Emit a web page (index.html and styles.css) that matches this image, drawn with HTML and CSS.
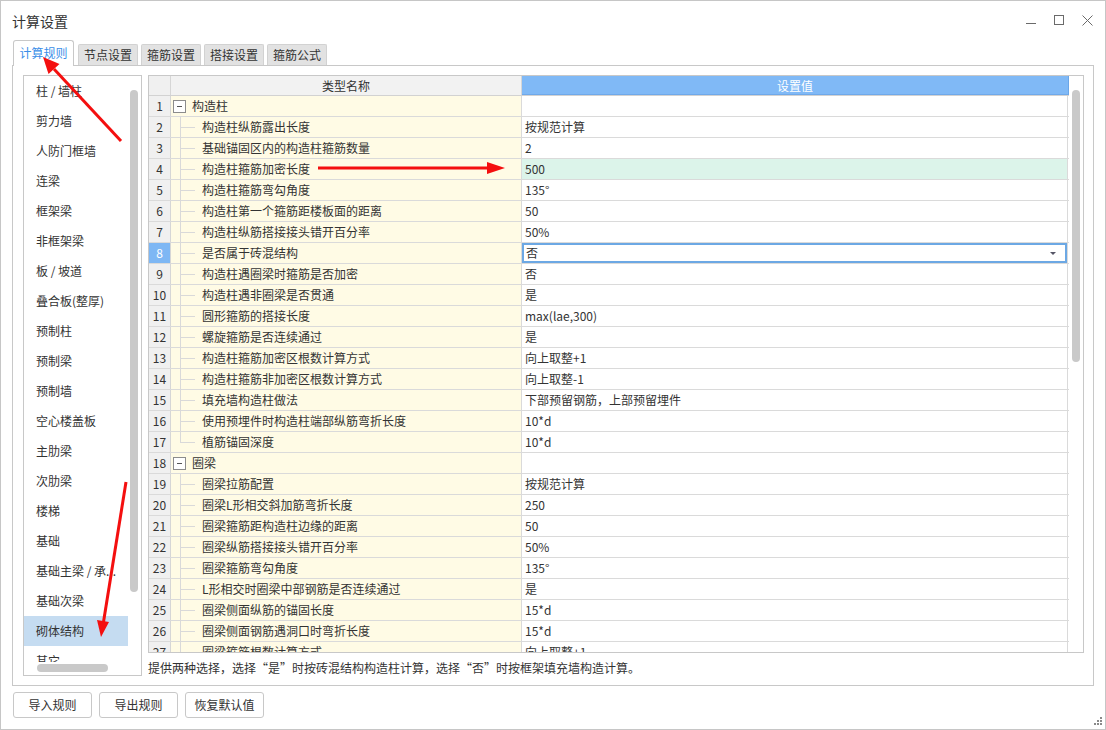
FILE: index.html
```html
<!DOCTYPE html>
<html lang="zh">
<head>
<meta charset="utf-8">
<title>计算设置</title>
<link rel="stylesheet" href="styles.css">
</head>
<body>
<div class="window">
  <div class="titlebar">
    <span class="title">计算设置</span>
    <div class="controls">
      <svg class="ctl" width="10" height="11" viewBox="0 0 10 11"><line x1="0" y1="8.5" x2="10" y2="8.5" stroke="#6a6a6a" stroke-width="1"/></svg>
      <svg class="ctl" width="10" height="11" viewBox="0 0 10 11"><rect x="0.5" y="0.5" width="9" height="9" fill="none" stroke="#6a6a6a" stroke-width="1"/></svg>
      <svg class="ctl" width="11" height="11" viewBox="0 0 11 11"><path d="M0.5 0.5 L10.5 10.5 M10.5 0.5 L0.5 10.5" stroke="#6a6a6a" stroke-width="1"/></svg>
    </div>
  </div>

  <div class="tabs">
    <div class="tab active">计算规则</div>
    <div class="tab">节点设置</div>
    <div class="tab">箍筋设置</div>
    <div class="tab">搭接设置</div>
    <div class="tab">箍筋公式</div>
  </div>

  <div class="panel">
    <div class="list">
      <div class="list-main">
        <div class="list-items">
          <div class="item">柱 / 墙柱</div>
          <div class="item">剪力墙</div>
          <div class="item">人防门框墙</div>
          <div class="item">连梁</div>
          <div class="item">框架梁</div>
          <div class="item">非框架梁</div>
          <div class="item">板 / 坡道</div>
          <div class="item">叠合板(整厚)</div>
          <div class="item">预制柱</div>
          <div class="item">预制梁</div>
          <div class="item">预制墙</div>
          <div class="item">空心楼盖板</div>
          <div class="item">主肋梁</div>
          <div class="item">次肋梁</div>
          <div class="item">楼梯</div>
          <div class="item">基础</div>
          <div class="item">基础主梁 / 承...</div>
          <div class="item">基础次梁</div>
          <div class="item selected">砌体结构</div>
          <div class="item">其它</div>
        </div>
        <div class="vscroll"><div class="vthumb"></div></div>
      </div>
      <div class="hscroll"><div class="hthumb"></div></div>
    </div>

    <div class="right">
      <div class="grid-box">
        <div class="grid">
          <div class="hdr">
            <div class="h-num"></div>
            <div class="h-name">类型名称</div>
            <div class="h-val">设置值</div>
          </div>
          <div class="row"><div class="c-num">1</div><div class="c-name group"><span class="toggle"></span>构造柱</div><div class="c-val"></div></div>
          <div class="row"><div class="c-num">2</div><div class="c-name child">构造柱纵筋露出长度</div><div class="c-val">按规范计算</div></div>
          <div class="row"><div class="c-num">3</div><div class="c-name child">基础锚固区内的构造柱箍筋数量</div><div class="c-val">2</div></div>
          <div class="row"><div class="c-num">4</div><div class="c-name child">构造柱箍筋加密长度</div><div class="c-val green">500</div></div>
          <div class="row"><div class="c-num">5</div><div class="c-name child">构造柱箍筋弯勾角度</div><div class="c-val">135°</div></div>
          <div class="row"><div class="c-num">6</div><div class="c-name child">构造柱第一个箍筋距楼板面的距离</div><div class="c-val">50</div></div>
          <div class="row"><div class="c-num">7</div><div class="c-name child">构造柱纵筋搭接接头错开百分率</div><div class="c-val">50%</div></div>
          <div class="row"><div class="c-num current">8</div><div class="c-name child">是否属于砖混结构</div><div class="c-val editing">否<span class="caret"></span></div></div>
          <div class="row"><div class="c-num">9</div><div class="c-name child">构造柱遇圈梁时箍筋是否加密</div><div class="c-val">否</div></div>
          <div class="row"><div class="c-num">10</div><div class="c-name child">构造柱遇非圈梁是否贯通</div><div class="c-val">是</div></div>
          <div class="row"><div class="c-num">11</div><div class="c-name child">圆形箍筋的搭接长度</div><div class="c-val">max(lae,300)</div></div>
          <div class="row"><div class="c-num">12</div><div class="c-name child">螺旋箍筋是否连续通过</div><div class="c-val">是</div></div>
          <div class="row"><div class="c-num">13</div><div class="c-name child">构造柱箍筋加密区根数计算方式</div><div class="c-val">向上取整+1</div></div>
          <div class="row"><div class="c-num">14</div><div class="c-name child">构造柱箍筋非加密区根数计算方式</div><div class="c-val">向上取整-1</div></div>
          <div class="row"><div class="c-num">15</div><div class="c-name child">填充墙构造柱做法</div><div class="c-val">下部预留钢筋，上部预留埋件</div></div>
          <div class="row"><div class="c-num">16</div><div class="c-name child">使用预埋件时构造柱端部纵筋弯折长度</div><div class="c-val">10*d</div></div>
          <div class="row"><div class="c-num">17</div><div class="c-name child last">植筋锚固深度</div><div class="c-val">10*d</div></div>
          <div class="row"><div class="c-num">18</div><div class="c-name group"><span class="toggle"></span>圈梁</div><div class="c-val"></div></div>
          <div class="row"><div class="c-num">19</div><div class="c-name child">圈梁拉筋配置</div><div class="c-val">按规范计算</div></div>
          <div class="row"><div class="c-num">20</div><div class="c-name child">圈梁L形相交斜加筋弯折长度</div><div class="c-val">250</div></div>
          <div class="row"><div class="c-num">21</div><div class="c-name child">圈梁箍筋距构造柱边缘的距离</div><div class="c-val">50</div></div>
          <div class="row"><div class="c-num">22</div><div class="c-name child">圈梁纵筋搭接接头错开百分率</div><div class="c-val">50%</div></div>
          <div class="row"><div class="c-num">23</div><div class="c-name child">圈梁箍筋弯勾角度</div><div class="c-val">135°</div></div>
          <div class="row"><div class="c-num">24</div><div class="c-name child">L形相交时圈梁中部钢筋是否连续通过</div><div class="c-val">是</div></div>
          <div class="row"><div class="c-num">25</div><div class="c-name child">圈梁侧面纵筋的锚固长度</div><div class="c-val">15*d</div></div>
          <div class="row"><div class="c-num">26</div><div class="c-name child">圈梁侧面钢筋遇洞口时弯折长度</div><div class="c-val">15*d</div></div>
          <div class="row"><div class="c-num">27</div><div class="c-name child">圈梁箍筋根数计算方式</div><div class="c-val">向上取整+1</div></div>
        </div>
        <div class="gscroll"><div class="gthumb"></div></div>
      </div>
      <div class="desc">提供两种选择，选择“是”时按砖混结构构造柱计算，选择“否”时按框架填充墙构造计算。</div>
    </div>
  </div>

  <div class="buttons">
    <div class="btn">导入规则</div>
    <div class="btn">导出规则</div>
    <div class="btn">恢复默认值</div>
  </div>

  <svg class="annot" width="1106" height="730" viewBox="0 0 1106 730">
    <g fill="#f40f0f" stroke="none">
      <line x1="121" y1="141" x2="54" y2="69" stroke="#f40f0f" stroke-width="3"/>
      <polygon points="43,57 59.5,64 48.5,74"/>
      <line x1="318" y1="168" x2="490" y2="168" stroke="#f40f0f" stroke-width="3"/>
      <polygon points="505,168 487,162 487,174"/>
      <line x1="126" y1="482" x2="103.5" y2="622" stroke="#f40f0f" stroke-width="3"/>
      <polygon points="101,637 97,620 109,622"/>
    </g>
    <g fill="#8a8a8a">
      <rect x="1100" y="717" width="2" height="2"/>
      <rect x="1097" y="720" width="2" height="2"/>
      <rect x="1100" y="720" width="2" height="2"/>
      <rect x="1094" y="723" width="2" height="2"/>
      <rect x="1097" y="723" width="2" height="2"/>
      <rect x="1100" y="723" width="2" height="2"/>
    </g>
  </svg>
</div>
</body>
</html>
```

FILE: styles.css
```css
html, body {
  margin: 0;
  padding: 0;
  background: #ffffff;
}

body {
  font-family: "Noto Sans CJK SC", "Microsoft YaHei", sans-serif;
  font-size: 12px;
  color: #333333;
}

.window {
  position: relative;
  width: 1106px;
  height: 730px;
  box-sizing: border-box;
  border: 1px solid #c6c6c6;
  display: flex;
  flex-direction: column;
  background: #ffffff;
}

/* title bar */
.titlebar {
  height: 39px;
  display: flex;
  align-items: center;
  justify-content: space-between;
  padding: 0 12px 0 11px;
  flex: none;
}

.title {
  font-size: 14px;
  line-height: 20px;
  color: #333333;
  margin-top: 0;
}

.controls {
  display: flex;
  align-items: center;
  gap: 18px;
  margin-top: 0;
}

.ctl {
  display: block;
}

/* tabs */
.tabs {
  height: 25px;
  flex: none;
  display: flex;
  align-items: flex-end;
  gap: 3px;
  padding-left: 12px;
}

.tab {
  width: 60px;
  height: 21px;
  box-sizing: border-box;
  border: 1px solid #d2d2d2;
  border-bottom: none;
  border-radius: 2px 2px 0 0;
  background: #e2e2e2;
  text-align: center;
  line-height: 20px;
  color: #333333;
}

.tab.active {
  width: 61px;
  height: 26px;
  margin-bottom: -1px;
  background: #ffffff;
  border-color: #c8c8c8;
  border-radius: 3px 3px 0 0;
  color: #3a8ee8;
  line-height: 24px;
  position: relative;
  z-index: 2;
  margin-right: 1px;
}

/* panel */
.panel {
  flex: none;
  height: 621px;
  margin: 0 11px;
  box-sizing: border-box;
  border: 1px solid #c8c8c8;
  padding: 9px 9px 9px 10px;
  display: flex;
  gap: 6px;
  position: relative;
  z-index: 1;
  background: #ffffff;
}

/* left list */
.list {
  width: 119px;
  flex: none;
  box-sizing: border-box;
  border: 1px solid #c8c8c8;
  display: flex;
  flex-direction: column;
}

.list-main {
  height: 586px;
  display: flex;
  overflow: hidden;
}

.list-items {
  width: 104px;
  overflow: hidden;
}

.item {
  height: 30px;
  line-height: 30px;
  padding-left: 12px;
  white-space: nowrap;
  color: #333333;
}

.item.selected {
  background: #c5dcf1;
}

.vscroll {
  flex: 1;
}

.vthumb {
  width: 8px;
  height: 502px;
  margin: 14px 0 0 2px;
  border-radius: 4px;
  background: #c9c9c9;
}

.hscroll {
  flex: 1;
  background: #ffffff;
}

.hthumb {
  width: 71px;
  height: 8px;
  margin: 2px 0 0 13px;
  border-radius: 4px;
  background: #c9c9c9;
}

/* right side */
.right {
  flex: 1;
  display: flex;
  flex-direction: column;
  min-width: 0;
}

.grid-box {
  height: 578px;
  flex: none;
  box-sizing: border-box;
  border: 1px solid #c8c8c8;
  display: flex;
  overflow: hidden;
}

.grid {
  width: 920px;
  flex: none;
  overflow: hidden;
}

.gscroll {
  flex: 1;
}

.gthumb {
  width: 8px;
  height: 272px;
  margin: 14px 0 0 3px;
  border-radius: 4px;
  background: #c9c9c9;
}

.hdr {
  display: flex;
  height: 19px;
  border-bottom: 1px solid #d2d2d2;
}

.h-num {
  width: 21px;
  border-right: 1px solid #d6d6d6;
  background: #f0f0f0;
}

.h-name {
  width: 350px;
  border-right: 1px solid #d6d6d6;
  background: #f2f2f2;
  text-align: center;
  line-height: 19px;
  color: #333333;
}

.h-val {
  width: 546px;
  border-right: 1px solid #6aa6e8;
  background: #80b9f6;
  color: #ffffff;
  text-align: center;
  line-height: 19px;
  box-shadow: inset 0 -1px 0 #6fa9ea;
}

.row {
  display: flex;
  height: 20px;
  border-bottom: 1px solid #dadada;
}

.c-num {
  width: 21px;
  border-right: 1px solid #d6d6d6;
  background: #f0f0f0;
  text-align: center;
  line-height: 20px;
  color: #333333;
}

.c-num.current {
  background: #7eb7f4;
  color: #ffffff;
}

.c-name {
  width: 350px;
  border-right: 1px solid #dadada;
  background: #fffbe5;
  line-height: 20px;
  position: relative;
  white-space: nowrap;
  color: #333333;
}

.c-name.child {
  padding-left: 31px;
  box-sizing: border-box;
  width: 351px;
}

.c-name.child::before {
  content: "";
  position: absolute;
  left: 9px;
  top: -1px;
  bottom: -1px;
  border-left: 1px solid #d9d9d9;
}

.c-name.child.last::before {
  bottom: 10px;
}

.c-name.child::after {
  content: "";
  position: absolute;
  left: 9px;
  top: 10px;
  width: 15px;
  border-top: 1px solid #d9d9d9;
}

.c-name.group {
  display: flex;
  align-items: center;
  padding-left: 2px;
  box-sizing: border-box;
  width: 351px;
}

.toggle {
  width: 13px;
  height: 13px;
  box-sizing: border-box;
  border: 1px solid #8c8c8c;
  margin-right: 6px;
  position: relative;
  background: #ffffff;
}

.toggle::after {
  content: "";
  position: absolute;
  left: 3px;
  top: 5px;
  width: 5px;
  border-top: 1px solid #555555;
}

.c-val {
  width: 546px;
  box-sizing: border-box;
  border-right: 1px solid #dadada;
  padding-left: 3px;
  line-height: 20px;
  background: #ffffff;
  color: #333333;
  position: relative;
  white-space: nowrap;
}

.c-val.green {
  background: #dcf4ea;
}

.c-val.editing {
  box-shadow: inset 0 0 0 2px #6ca8e4;
  padding-left: 4px;
}

.caret {
  position: absolute;
  right: 11px;
  top: 9px;
  width: 0;
  height: 0;
  border-left: 3px solid transparent;
  border-right: 3px solid transparent;
  border-top: 3px solid #555566;
}

.desc {
  margin-top: 7px;
  line-height: 16px;
  white-space: nowrap;
  color: #333333;
}

/* buttons */
.buttons {
  display: flex;
  gap: 7px;
  padding: 6px 0 0 12px;
  flex: none;
}

.btn {
  width: 79px;
  height: 26px;
  box-sizing: border-box;
  border: 1px solid #c8c8c8;
  border-radius: 3px;
  background: #ffffff;
  text-align: center;
  line-height: 24px;
  color: #333333;
}

/* annotations overlay */
.annot {
  position: absolute;
  left: -1px;
  top: -1px;
  pointer-events: none;
  z-index: 5;
}
```
